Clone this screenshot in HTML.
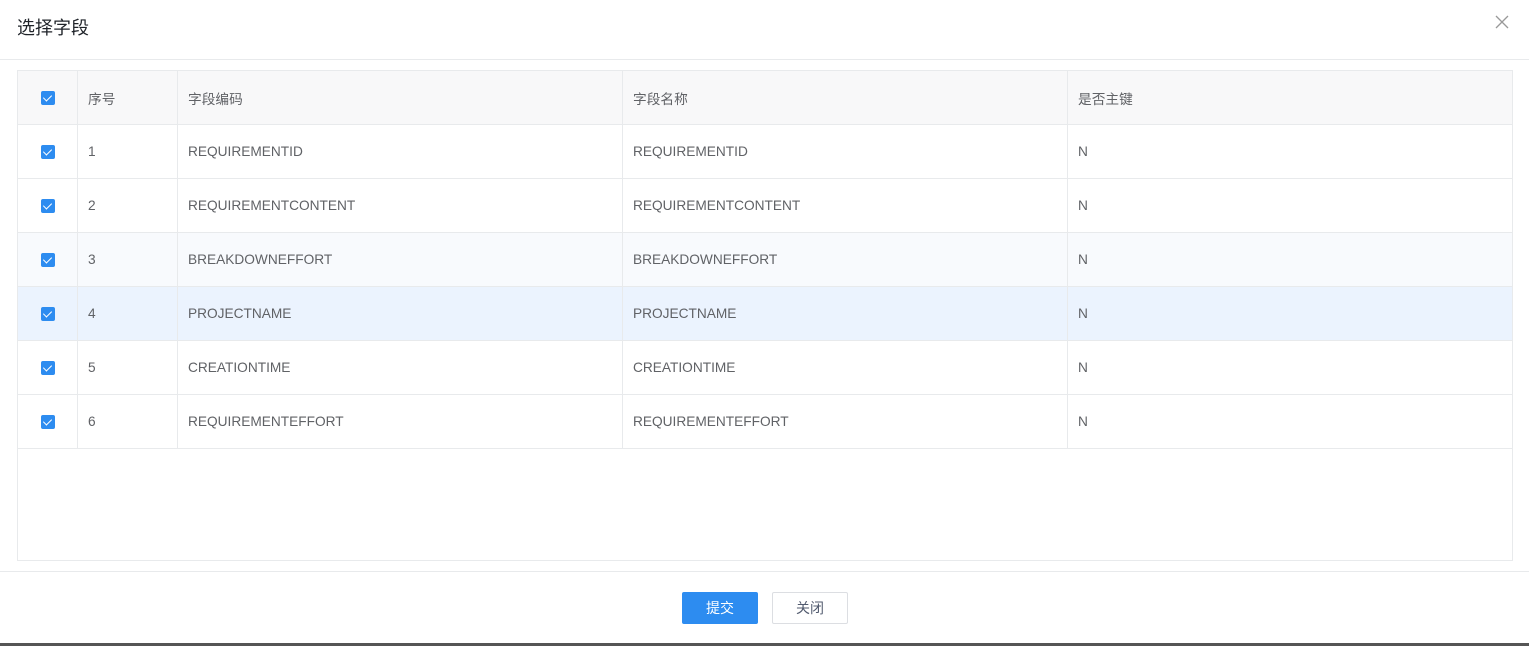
<!DOCTYPE html><html><head><meta charset="utf-8"><style>
*{margin:0;padding:0;box-sizing:border-box}
body{width:1529px;height:646px;background:#fff;font-family:"Liberation Sans","Noto Sans CJK SC",sans-serif;position:relative;overflow:hidden;color:#606266;font-size:14px}
.title{position:absolute;left:17px;top:14px;font-size:18px;color:#1f2329}
.close{position:absolute;left:1494px;top:14px;width:16px;height:16px}
.hl{position:absolute;left:0;width:1529px;height:1px;background:#e8eaec}
table{position:absolute;left:17px;top:70px;width:1495px;border-collapse:collapse;table-layout:fixed}
td{height:54px;border-bottom:1px solid #e8eaec;border-right:1px solid #e8eaec;padding-left:10px;font-size:13.7px}
tr:first-child td{background:#f8f8f9;border-top:1px solid #e8eaec}
td:first-child{border-left:1px solid #e8eaec;padding:0;text-align:center}
.cb{display:inline-block;width:14px;height:14px;background:#2d8cf0;border-radius:2px;vertical-align:middle;position:relative}
.cb:after{content:"";position:absolute;left:4px;top:1.5px;width:4px;height:7px;border:solid #fff;border-width:0 1.5px 1.5px 0;transform:rotate(45deg)}
.box{position:absolute;left:17px;top:70px;width:1496px;height:491px;border:1px solid #e8eaec;border-top:none}
.btn{position:absolute;top:592px;height:32px;width:76px;border-radius:2px;font-size:14px;text-align:center;line-height:30px}
</style></head><body>
<div class="title">选择字段</div>
<svg class="close" viewBox="0 0 16 16"><path d="M2 2L14 14M14 2L2 14" stroke="#999" stroke-width="1.3"/></svg>
<div class="hl" style="top:59px"></div>
<div class="box"></div>
<table>
<colgroup><col style="width:60px"><col style="width:100px"><col style="width:445px"><col style="width:445px"><col style="width:445px"></colgroup>
<tr><td><span class="cb"></span></td><td>序号</td><td>字段编码</td><td>字段名称</td><td>是否主键</td></tr>
<tr><td><span class="cb"></span></td><td>1</td><td>REQUIREMENTID</td><td>REQUIREMENTID</td><td>N</td></tr>
<tr><td><span class="cb"></span></td><td>2</td><td>REQUIREMENTCONTENT</td><td>REQUIREMENTCONTENT</td><td>N</td></tr>
<tr style="background:#f8fafd"><td><span class="cb"></span></td><td>3</td><td>BREAKDOWNEFFORT</td><td>BREAKDOWNEFFORT</td><td>N</td></tr>
<tr style="background:#ebf3fe"><td><span class="cb"></span></td><td>4</td><td>PROJECTNAME</td><td>PROJECTNAME</td><td>N</td></tr>
<tr><td><span class="cb"></span></td><td>5</td><td>CREATIONTIME</td><td>CREATIONTIME</td><td>N</td></tr>
<tr><td><span class="cb"></span></td><td>6</td><td>REQUIREMENTEFFORT</td><td>REQUIREMENTEFFORT</td><td>N</td></tr>
</table>
<div class="hl" style="top:571px"></div>
<div class="btn" style="left:682px;background:#2d8cf0;color:#fff;line-height:32px">提交</div>
<div class="btn" style="left:772px;border:1px solid #dcdee2;color:#515a6e">关闭</div>
<div style="position:absolute;left:0;top:643px;width:1529px;height:3px;background:#555"></div>
</body></html>
